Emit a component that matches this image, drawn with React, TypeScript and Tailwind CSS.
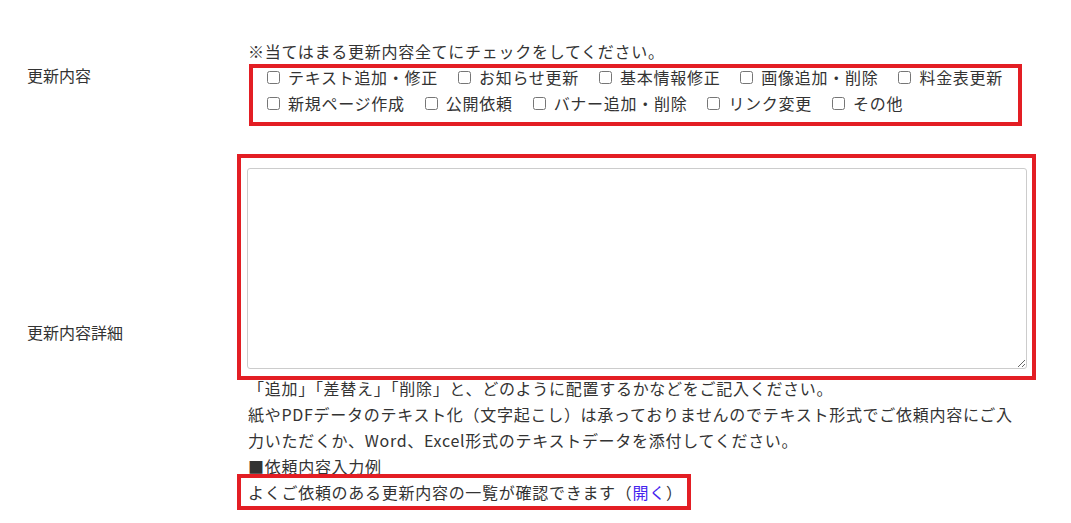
import React from "react";

const row1 = ["テキスト追加・修正", "お知らせ更新", "基本情報修正", "画像追加・削除", "料金表更新"];
const row2 = ["新規ページ作成", "公開依頼", "バナー追加・削除", "リンク変更", "その他"];

function Item({ label }: { label: string }) {
  return (
    <label className="flex items-center shrink-0 whitespace-nowrap h-[26px] mr-[20px]">
      <input type="checkbox" className="w-[13px] h-[13px] m-0 shrink-0" />
      <span className="ml-[8px]">{label}</span>
    </label>
  );
}

export default function App() {
  return (
    <div
      className="bg-white w-[1071px] h-[523px] overflow-hidden text-[#333] text-[16px] leading-[26px] pt-[38px]"
      style={{ fontFamily: '"Noto Sans CJK JP", "Noto Sans", sans-serif' }}
    >
      {/* Row 1 */}
      <div className="flex items-start">
        <div className="w-[248px] pl-[27px] pt-[24px] shrink-0">更新内容</div>
        <div className="flex flex-col tracking-[0.045em]">
          <div className="whitespace-nowrap">※当てはまる更新内容全てにチェックをしてください。</div>
          <div className="ml-[1px] w-[773px] h-[62px] border-[4px] border-[#e31e24] pl-[14px] overflow-hidden">
            <div className="flex -mt-[4px]">
              {row1.map((l) => (
                <Item key={l} label={l} />
              ))}
            </div>
            <div className="flex">
              {row2.map((l) => (
                <Item key={l} label={l} />
              ))}
            </div>
          </div>
        </div>
      </div>

      {/* Row 2 */}
      <div className="flex items-center mt-[28px]">
        <div className="w-[248px] pl-[27px] shrink-0">更新内容詳細</div>
        <div className="flex flex-col tracking-[0.045em]">
          <div className="-ml-[11px] w-[799px] border-[4px] border-[#e31e24] pl-[6px] pt-[10px] pr-[5px] pb-[7px]">
            <textarea className="block w-[780px] h-[201px] border border-[#cccccc] rounded-[3px] bg-white" />
          </div>
          <div className="-mt-[5px]">「追加」「差替え」「削除」と、どのように配置するかなどをご記入ください。</div>
          <div className="w-[780px]">
            紙やPDFデータのテキスト化（文字起こし）は承っておりませんのでテキスト形式でご依頼内容にご入力いただくか、Word、Excel形式のテキストデータを添付してください。
          </div>
          <div>■依頼内容入力例</div>
          <div className="-mt-[5px] -ml-[11px]">
            <div className="inline-block border-[4px] border-[#e31e24] pl-[7px] pr-[4px] py-[1px]">
              よくご依頼のある更新内容の一覧が確認できます（<span className="text-[#4422ee]">開く</span>）
            </div>
          </div>
        </div>
      </div>
    </div>
  );
}
